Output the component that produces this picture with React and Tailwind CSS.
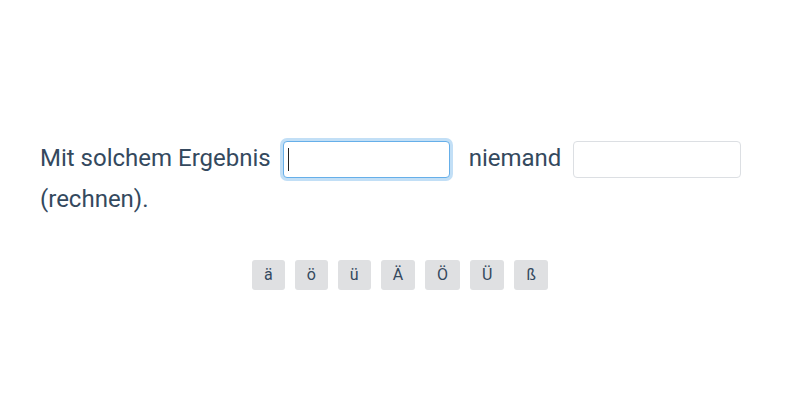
const chars = ['ä', 'ö', 'ü', 'Ä', 'Ö', 'Ü', 'ß'];

export default function App() {
  return (
    <div className="min-h-screen bg-white font-['Roboto',sans-serif] text-[#34495e]">
      <div className="px-10 pt-[138px]">
        <p className="text-[24px] leading-[41px]">
          Mit solchem Ergebnis{' '}
          <span className="relative ml-[6px] mr-[13px] inline-block align-middle">
            <input
              type="text"
              autoFocus
              className="block h-[37px] w-[167px] rounded-[4px] border border-[#66afe9] bg-white px-[6px] outline-none ring-[3px] ring-[#66afe9]/40"
            />
            <span className="pointer-events-none absolute left-[5px] top-[7px] h-[23px] w-px bg-[#222]" />
          </span>{' '}
          niemand{' '}
          <input
            type="text"
            className="ml-[6px] h-[37px] w-[168px] rounded-[4px] border border-[#dcdfe3] bg-white px-[6px] align-middle outline-none"
          />{' '}
          (rechnen).
        </p>
        <div className="mt-[40px] flex justify-center gap-[10px]">
          {chars.map((c) => (
            <button
              key={c}
              type="button"
              className="h-[30px] rounded-[3px] bg-[#dfe0e2] px-[12px] text-[16px] text-[#34495e]"
            >
              {c}
            </button>
          ))}
        </div>
      </div>
    </div>
  );
}
